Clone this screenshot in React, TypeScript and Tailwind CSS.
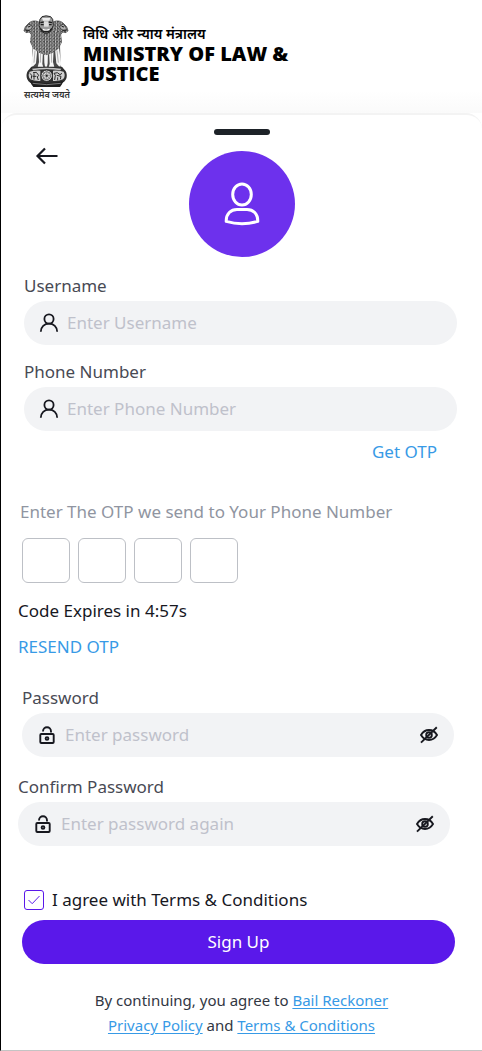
import { useState } from "react";
import type { ReactNode } from "react";

function Emblem() {
  return (
    <svg viewBox="0 0 162 228" className="h-[76px] w-[54px]" role="img" aria-label="State Emblem of India">
      <defs>
        <pattern id="mane" width="10" height="10" patternUnits="userSpaceOnUse">
          <rect width="10" height="10" fill="#4a4a4a" />
          <path d="M1 1q2 3 0 6M6 4q2 3 0 6M6-2q1 2 0 4" stroke="#dedede" strokeWidth="2.4" fill="none" />
        </pattern>
      </defs>
      {/* side lions */}
      <g>
        <path d="M60 32C48 24 36 26 28 32L16 44L12 56L18 62L28 60L34 68L32 92L46 112L70 100V40Z" fill="url(#mane)" stroke="#3b3b3b" strokeWidth="2" />
        <path d="M26 36L18 47L16 55L24 56L32 52L38 44Z" fill="#b3b3b3" stroke="#222" strokeWidth="2" />
        <path d="M24 45L31 43M18 54L28 55" stroke="#1a1a1a" strokeWidth="3" />
      </g>
      <g transform="translate(156 0) scale(-1 1)">
        <path d="M60 32C48 24 36 26 28 32L16 44L12 56L18 62L28 60L34 68L32 92L46 112L70 100V40Z" fill="url(#mane)" stroke="#3b3b3b" strokeWidth="2" />
        <path d="M26 36L18 47L16 55L24 56L32 52L38 44Z" fill="#b3b3b3" stroke="#222" strokeWidth="2" />
        <path d="M24 45L31 43M18 54L28 55" stroke="#1a1a1a" strokeWidth="3" />
      </g>
      {/* legs */}
      <path d="M38 98H120L122 168H36Z" fill="#4a4a4a" />
      <path d="M40 108L52 112L48 154L38 164L33 158ZM55 112L69 116L67 156L70 166H53L57 150ZM72 118H84L83 154L81 164H75L73 152ZM87 116L101 112L99 150L103 166H86L89 156ZM105 112L117 108L124 158L118 164L109 154Z" fill="#f6f6f6" />
      <path d="M45 116L42 152M62 120L61 152M94 120L95 152M111 116L115 152" stroke="#8d8d8d" strokeWidth="2" />
      {/* chest and mane */}
      <path d="M54 54L34 68L30 88L38 108L56 122L78 130L100 122L118 108L126 88L122 68L102 54Z" fill="url(#mane)" />
      {/* front lion face */}
      <path d="M60 22L66 14Q78 9 92 14L98 22L100 40L92 58L78 66L64 58L57 40Z" fill="#9b9b9b" stroke="#282828" strokeWidth="3" />
      <path d="M66 18H91L88 26H69Z" fill="#ededed" />
      <path d="M72 28H86V44H72Z" fill="#dedede" />
      <path d="M61 32L71 30M86 30L96 32M62 38H71M87 38H95" stroke="#1d1d1d" strokeWidth="4" />
      <path d="M60 47Q78 60 97 47L92 58Q78 66 64 58Z" fill="#202020" />
      <path d="M68 52Q78 57 89 52" stroke="#fff" strokeWidth="4" fill="none" />
      {/* abacus */}
      <path d="M34 164H126L132 172Q142 180 140 196Q138 210 120 216H38Q22 210 20 196Q18 180 28 172Z" fill="#303030" />
      <path d="M36 170Q80 164 124 170L121 175Q80 169 39 175Z" fill="#c4c4c4" />
      <path d="M29 179Q43 175 61 176V207Q43 208 31 202Q22 192 29 179ZM99 176Q117 175 131 179Q138 192 129 202Q117 208 99 207Z" fill="#d0d0d0" />
      <path d="M30 184L35 190L34 200M39 182L49 181L56 190L52 195L55 204M42 184V203M38 193H49M104 204L106 190L102 184L112 182L120 188L126 184M110 190L123 193L121 202M113 196V205" stroke="#2a2a2a" strokeWidth="3" fill="none" />
      <circle cx="80" cy="191" r="17" fill="#eee" stroke="#252525" strokeWidth="3" />
      <circle cx="80" cy="191" r="12" fill="#ddd" stroke="#666" strokeWidth="3" />
      <path d="M80 178V204M67 191H93M71 182L89 200M89 182L71 200" stroke="#777" strokeWidth="2" />
      <circle cx="80" cy="191" r="3" fill="#222" />
      {/* base */}
      <path d="M30 207Q80 220 130 207L126 217L120 225H40L34 217Z" fill="#1f1f1f" />
      <path d="M38 214Q80 222 122 214" stroke="#aaa" strokeWidth="2" fill="none" />
    </svg>
  );
}

function ProfileGlyph() {
  return (
    <svg viewBox="0 0 36 44" fill="none" stroke="white" strokeWidth="3" className="h-11 w-9" aria-hidden="true">
      <ellipse cx="18" cy="12.5" rx="9.3" ry="10.5" />
      <path d="M2.2 39.4C2 31.5 7 27.5 13 27.5H23C29 27.5 34 31.5 33.8 39.4Q18 44 2.2 39.4Z" strokeLinejoin="round" />
    </svg>
  );
}

function UserIcon() {
  return (
    <svg viewBox="0 0 20 20" fill="none" stroke="#17181f" strokeWidth="1.8" className="size-5 shrink-0" aria-hidden="true">
      <circle cx="10" cy="6" r="4.6" />
      <path d="M1.8 18.8C1.8 13.8 5.4 10.6 10 10.6S18.2 13.8 18.2 18.8" />
    </svg>
  );
}

function LockIcon() {
  return (
    <svg viewBox="0 0 20 20" fill="none" stroke="#17181f" strokeWidth="1.9" className="size-5 shrink-0" aria-hidden="true">
      <rect x="3.3" y="9" width="13.4" height="9" rx="1" />
      <path d="M6 6.4A4 4.1 0 0 1 14 6.4V7.4" />
      <circle cx="10" cy="13.5" r="1.4" />
    </svg>
  );
}

function EyeOffIcon() {
  return (
    <svg viewBox="0 0 20 20" fill="none" stroke="#17181f" strokeWidth="1.9" className="size-5" aria-hidden="true">
      <path d="M2 10Q5 5 10 5T18 10Q15 15 10 15T2 10Z" />
      <circle cx="10" cy="10" r="2.8" />
      <path d="M2 17.6L17.8 2.2" />
    </svg>
  );
}

type FieldProps = {
  id: string;
  label: string;
  placeholder: string;
  icon: ReactNode;
  type?: string;
};

function Field({ id, label, placeholder, icon, type = "text" }: FieldProps) {
  const [visible, setVisible] = useState(false);
  const secret = type === "password";
  return (
    <div className="flex flex-col gap-[5px]">
      <label htmlFor={id} className="leading-5 text-[#484a54]">
        {label}
      </label>
      <div className="flex h-11 items-center gap-2 rounded-full bg-[#f2f3f5] px-[15px]">
        {icon}
        <input
          id={id}
          type={secret && visible ? "text" : type}
          placeholder={placeholder}
          className="min-w-0 flex-1 bg-transparent outline-none placeholder:text-[#bfc1cb]"
        />
        {secret && (
          <button type="button" aria-label="Toggle password visibility" onClick={() => setVisible(!visible)}>
            <EyeOffIcon />
          </button>
        )}
      </div>
    </div>
  );
}

export default function App() {
  const [agreed, setAgreed] = useState(true);
  return (
    <div className="border-b border-l border-b-[#c4c4c4] border-l-black bg-white font-['Noto_Sans',sans-serif] text-[17px] text-[#17181f]">
      <header className="flex bg-linear-to-b from-white from-80% to-[#fafafa] pt-3 pb-[11px] pl-[19px]">
        <div className="flex flex-col items-center">
          <Emblem />
          <p className="text-[9px] leading-[14px] font-semibold text-[#333]">सत्यमेव जयते</p>
        </div>
        <div className="flex max-w-60 flex-col pt-3 pl-[9px] text-black">
          <p className="text-sm leading-5 font-semibold">विधि और न्याय मंत्रालय</p>
          <h1 className="font-['Open_Sans',sans-serif] text-xl leading-5 font-extrabold">MINISTRY OF LAW &amp; JUSTICE</h1>
        </div>
      </header>

      <main className="rounded-t-2xl border-t-2 border-[#f3f3f3] bg-white pt-[14px] pb-3">
        <div className="mx-auto h-[6px] w-14 rounded-full bg-[#1d2228]" />
        <div className="grid grid-cols-[1fr_auto_1fr] pt-3">
          <button type="button" aria-label="Back" className="ml-[34px] h-fit w-fit">
            <svg viewBox="0 0 24 18" fill="none" stroke="#17181f" strokeWidth="2.2" className="h-[18px] w-6" aria-hidden="true">
              <path d="M22.5 9H2.5M10 1.5L2.5 9L10 16.5" />
            </svg>
          </button>
          <div className="mt-1 flex size-[106px] items-center justify-center rounded-full bg-[#6d31ed]">
            <ProfileGlyph />
          </div>
        </div>

        <form onSubmit={(e) => e.preventDefault()}>
          <section className="flex flex-col gap-[17px] pt-[19px] pr-[25px] pl-[23px]">
            <Field id="username" label="Username" placeholder="Enter Username" icon={<UserIcon />} />
            <Field id="phone" label="Phone Number" placeholder="Enter Phone Number" icon={<UserIcon />} type="tel" />
          </section>
          <div className="flex justify-end pt-[11px] pr-[45px]">
            <button type="button" className="leading-5 text-[#379ae6]">
              Get OTP
            </button>
          </div>

          <div role="group" aria-labelledby="otp-title" className="pt-10 pl-[19px]">
            <p id="otp-title" className="leading-5 text-[#9095a1]">
              Enter The OTP we send to Your Phone Number
            </p>
            <div className="flex gap-2 pt-4 pl-[2px]">
              {[1, 2, 3, 4].map((n) => (
                <input
                  key={n}
                  aria-label={`OTP digit ${n}`}
                  inputMode="numeric"
                  maxLength={1}
                  className="h-[45px] w-12 rounded-md border border-[#bdc0c6] bg-white text-center outline-none"
                />
              ))}
            </div>
          </div>
          <div className="flex flex-col items-start gap-4 pt-[18px] pl-[17px]">
            <p className="leading-5">Code Expires in 4:57s</p>
            <button type="button" className="leading-5 text-[#379ae6]">
              RESEND OTP
            </button>
          </div>

          <div className="pt-[31px] pr-7 pl-[21px]">
            <Field id="password" label="Password" placeholder="Enter password" icon={<LockIcon />} type="password" />
          </div>
          <div className="pt-5 pr-8 pl-[17px]">
            <Field id="confirm" label="Confirm Password" placeholder="Enter password again" icon={<LockIcon />} type="password" />
          </div>

          <div className="flex flex-col gap-[10px] pt-11 pr-[27px] pl-[21px]">
            <label className="flex items-center gap-2 pl-[2px] leading-5">
              <span className="grid size-5 place-items-center">
                <input
                  type="checkbox"
                  checked={agreed}
                  onChange={(e) => setAgreed(e.target.checked)}
                  className="peer col-start-1 row-start-1 size-5 appearance-none rounded-[3px] border border-[#5a18ea]"
                />
                <svg
                  viewBox="0 0 12 10"
                  fill="none"
                  stroke="#5a18ea"
                  className="pointer-events-none invisible col-start-1 row-start-1 h-[10px] w-3 peer-checked:visible"
                  aria-hidden="true"
                >
                  <path d="M0.5 5L4.2 8.7L11.5 1" />
                </svg>
              </span>
              I agree with Terms &amp; Conditions
            </label>
            <button type="submit" className="h-11 rounded-full bg-[#5a18ea] text-white">
              Sign Up
            </button>
          </div>
        </form>

        <p className="mx-auto max-w-80 pt-6 text-center text-[15px] leading-[25px] text-[#323743]">
          By continuing, you agree to{" "}
          <a href="#bail-reckoner" className="text-[#379ae6] underline underline-offset-2">
            Bail Reckoner
          </a>{" "}
          <a href="#privacy" className="text-[#379ae6] underline underline-offset-2">
            Privacy Policy
          </a>{" "}
          and{" "}
          <a href="#terms" className="text-[#379ae6] underline underline-offset-2">
            Terms &amp; Conditions
          </a>
        </p>
      </main>
    </div>
  );
}
